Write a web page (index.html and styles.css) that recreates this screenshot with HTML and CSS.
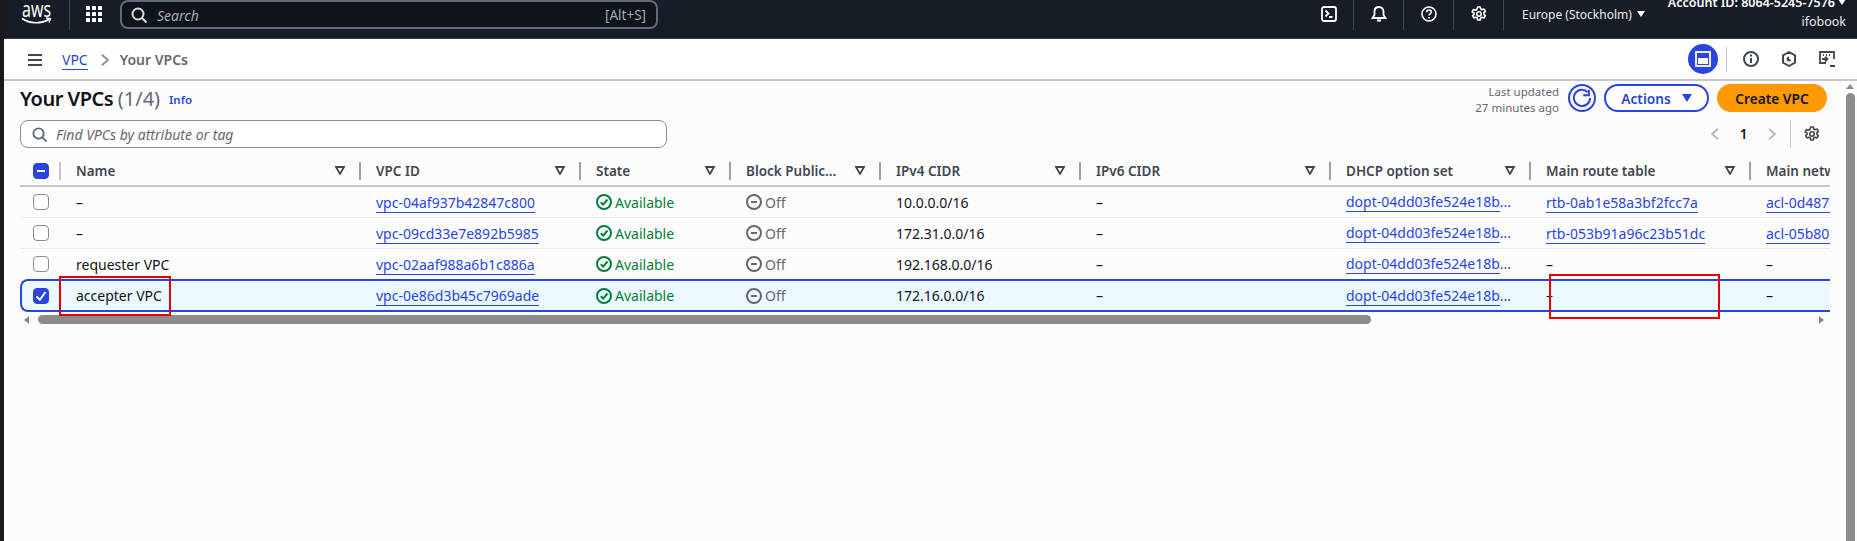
FILE: index.html
```html
<!DOCTYPE html>
<html lang="en">
<head>
<meta charset="utf-8">
<title>Your VPCs</title>
<link rel="stylesheet" href="styles.css">
</head>
<body>
<div class="edge"></div>
<div class="app">
  <header class="topbar">
    <svg class="aws" viewBox="0 0 32 26" width="32" height="26"><text x="2" y="14" textLength="29" lengthAdjust="spacingAndGlyphs" class="aws-text">aws</text><path d="M2 15.500c8 5.500 19 5.500 27 1" fill="none" stroke="#fff" stroke-width="1.600"/><path d="M26 15l4.500 .8-1.500 3.800" fill="none" stroke="#fff" stroke-width="1.300"/></svg>
    <span class="top-sep sep-a"></span>
    <svg class="grid-ico" viewBox="0 0 16 16" width="16" height="16" fill="#fff"><rect width="4" height="4" rx=".6"/><rect x="6" width="4" height="4" rx=".6"/><rect x="12" width="4" height="4" rx=".6"/><rect y="6" width="4" height="4" rx=".6"/><rect x="6" y="6" width="4" height="4" rx=".6"/><rect x="12" y="6" width="4" height="4" rx=".6"/><rect y="12" width="4" height="4" rx=".6"/><rect x="6" y="12" width="4" height="4" rx=".6"/><rect x="12" y="12" width="4" height="4" rx=".6"/></svg>
    <div class="top-search">
      <svg viewBox="0 0 16 16" width="16" height="16" fill="none" stroke="#d5dbdb" stroke-width="2"><circle cx="7" cy="7" r="5.500"/><path d="M11 11l4.500 4.500"/></svg>
      <span class="top-search-text">Search</span>
      <span class="top-search-key">[Alt+S]</span>
    </div>
    <div class="top-icons">
      <span class="top-ico"><svg viewBox="0 0 16 16" width="16" height="16" fill="none" stroke="#fff" stroke-width="1.800"><rect x="1" y="1" width="14" height="14" rx="2"/><path d="M4.500 4.500L7.500 7.500 4.500 10.500M8 11h3.500"/></svg></span>
      <span class="top-ico"><svg viewBox="0 0 16 16" width="16" height="16" fill="none" stroke="#fff" stroke-width="1.800"><path d="M8 1c-3 0-4.500 2-4.500 4.500V9L1.500 12h13l-2-3V5.500C12.500 3 11 1 8 1z"/><path d="M6 14.500h4" stroke-width="2"/></svg></span>
      <span class="top-ico"><svg viewBox="0 0 16 16" width="16" height="16" fill="none" stroke="#fff" stroke-width="1.600"><circle cx="8" cy="8" r="7"/><path d="M5.800 6.200C5.800 4.800 6.800 4 8 4s2.300.8 2.300 2.100c0 1.800-2.300 1.800-2.300 3.500M8 11v1.500" stroke-width="1.700"/></svg></span>
      <span class="top-ico"><svg viewBox="0 0 16 16" width="16" height="16" fill="none" stroke="#fff" stroke-width="1.600"><path d="M6.700 1h2.600l.4 2 1.400.8 2-.7 1.300 2.200-1.500 1.400v1.600l1.500 1.400-1.300 2.200-2-.7-1.400.8-.4 2H6.700l-.4-2-1.400-.8-2 .7-1.300-2.200 1.500-1.400V7.200L1.100 5.800l1.300-2.200 2 .7 1.400-.8z" stroke-linejoin="round"/><circle cx="8" cy="8" r="2.200"/></svg></span>
    </div>
    <div class="region"><span>Europe (Stockholm)</span><i class="caret caret-white"></i></div>
    <div class="account">
      <div class="account-id">Account ID: 8064-5245-7576<i class="caret caret-white"></i></div>
      <div class="account-name">ifobook</div>
    </div>
  </header>

  <nav class="crumbbar">
    <svg class="burger" viewBox="0 0 14 12" width="14" height="12" fill="#414750"><rect width="14" height="2"/><rect y="5" width="14" height="2"/><rect y="10" width="14" height="2"/></svg>
    <a class="crumb-link">VPC</a>
    <svg class="crumb-chev" viewBox="0 0 8 12" width="8" height="12" fill="none" stroke="#879596" stroke-width="2"><path d="M1 .8L6.800 6 1 11.200"/></svg>
    <span class="crumb-here">Your VPCs</span>
    <div class="crumb-tools">
      <span class="panel-btn"><svg viewBox="0 0 16 16" width="16" height="16" fill="none" stroke="#fff" stroke-width="1.800"><rect x="1" y="1" width="14" height="14"/><rect x="3" y="7" width="10" height="6" fill="#fff" stroke="none"/></svg></span>
      <span class="crumb-sep"></span>
      <span class="tool"><svg viewBox="0 0 16 16" width="16" height="16" fill="none" stroke="#414750" stroke-width="2"><circle cx="8" cy="8" r="7"/><path d="M8 7v5M8 3.500v2"/></svg></span>
      <span class="tool"><svg viewBox="0 0 16 16" width="16" height="16" fill="none" stroke="#414750" stroke-width="2"><path d="M8 1l6 3.400v7.200L8 15l-6-3.400V4.400z" stroke-linejoin="round"/><path d="M8 5.500a2.500 2.500 0 1 0 2.300 3.500L8 8z" fill="#414750" stroke="none"/></svg></span>
      <span class="tool"><svg viewBox="0 0 16 16" width="16" height="16" fill="none" stroke="#414750" stroke-width="1.800"><path d="M7 12H1V1h14v7"/><path d="M4 4h1M7 4h1M10 4h1" stroke-width="2"/><path d="M3 8h5M6 5.800L8.500 8 6 10.500M11 15h5"/></svg></span>
    </div>
  </nav>

  <main class="content">
    <div class="page">
      <div class="title-row">
        <h1 class="title">Your VPCs <span class="count">(1/4)</span></h1>
        <a class="info">Info</a>
        <div class="title-actions">
          <div class="updated">Last updated<br>27 minutes ago</div>
          <span class="refresh"><svg viewBox="0 0 16 16" width="20" height="20" fill="none" stroke="#2a44e0" stroke-width="1.600"><path d="M12.500 3.200A6.500 6.500 0 1 0 14.500 8"/><path d="M9 5.800h4.500V1.500"/></svg></span>
          <button class="btn-actions">Actions<i class="caret caret-blue"></i></button>
          <button class="btn-create">Create VPC</button>
        </div>
      </div>
      <div class="filter-row">
        <div class="filter">
          <svg viewBox="0 0 16 16" width="15" height="15" fill="none" stroke="#5f6b7a" stroke-width="2"><circle cx="7" cy="7" r="5.500"/><path d="M11 11l4.500 4.500"/></svg>
          <span>Find VPCs by attribute or tag</span>
        </div>
        <div class="pager">
          <svg viewBox="0 0 8 12" width="8" height="12" fill="none" stroke="#b4bac2" stroke-width="2"><path d="M7 .8L1.200 6 7 11.200"/></svg>
          <span class="page-num">1</span>
          <svg viewBox="0 0 8 12" width="8" height="12" fill="none" stroke="#b4bac2" stroke-width="2"><path d="M1 .8L6.800 6 1 11.200"/></svg>
          <span class="pager-sep"></span>
          <svg class="pager-gear" viewBox="0 0 16 16" width="16" height="16" fill="none" stroke="#414750" stroke-width="1.600"><path d="M6.700 1h2.600l.4 2 1.400.8 2-.7 1.300 2.200-1.500 1.400v1.600l1.500 1.400-1.300 2.200-2-.7-1.400.8-.4 2H6.700l-.4-2-1.400-.8-2 .7-1.300-2.200 1.500-1.400V7.200L1.100 5.800l1.300-2.200 2 .7 1.400-.8z" stroke-linejoin="round"/><circle cx="8" cy="8" r="2.200"/></svg>
        </div>
      </div>

      <div class="table-wrap">
        <table class="vpcs">
          <colgroup>
            <col class="c-check"><col class="c-name"><col class="c-id"><col class="c-state"><col class="c-block"><col class="c-v4"><col class="c-v6"><col class="c-dhcp"><col class="c-rtb"><col class="c-acl">
          </colgroup>
          <thead>
            <tr>
              <th><span class="check check-on"><i class="dash"></i></span></th>
              <th><span class="th-in">Name<svg class="funnel" viewBox="0 0 10 9" width="10" height="9"><path d="M1 1h8L5 8z"/></svg></span></th>
              <th><span class="th-in">VPC ID<svg class="funnel" viewBox="0 0 10 9" width="10" height="9"><path d="M1 1h8L5 8z"/></svg></span></th>
              <th><span class="th-in">State<svg class="funnel" viewBox="0 0 10 9" width="10" height="9"><path d="M1 1h8L5 8z"/></svg></span></th>
              <th><span class="th-in">Block Public...<svg class="funnel" viewBox="0 0 10 9" width="10" height="9"><path d="M1 1h8L5 8z"/></svg></span></th>
              <th><span class="th-in">IPv4 CIDR<svg class="funnel" viewBox="0 0 10 9" width="10" height="9"><path d="M1 1h8L5 8z"/></svg></span></th>
              <th><span class="th-in">IPv6 CIDR<svg class="funnel" viewBox="0 0 10 9" width="10" height="9"><path d="M1 1h8L5 8z"/></svg></span></th>
              <th><span class="th-in">DHCP option set<svg class="funnel" viewBox="0 0 10 9" width="10" height="9"><path d="M1 1h8L5 8z"/></svg></span></th>
              <th><span class="th-in">Main route table<svg class="funnel" viewBox="0 0 10 9" width="10" height="9"><path d="M1 1h8L5 8z"/></svg></span></th>
              <th class="th-last"><span class="th-in">Main network ACL</span></th>
            </tr>
          </thead>
          <tbody>
            <tr>
              <td><span class="check"></span></td><td>–</td><td><a class="lnk">vpc-04af937b42847c800</a></td>
              <td><span class="ok"><svg viewBox="0 0 16 16" width="16" height="16" fill="none" stroke="#037f3c" stroke-width="2"><circle cx="8" cy="8" r="7"/><path d="M4.800 8.200L7.200 10.600 11.500 5.500"/></svg>Available</span></td>
              <td><span class="off"><svg viewBox="0 0 16 16" width="16" height="16" fill="none" stroke="#656871" stroke-width="2"><circle cx="8" cy="8" r="7"/><path d="M5 8h6"/></svg>Off</span></td>
              <td>10.0.0.0/16</td><td>–</td><td><span class="dhcp"><a class="lnk lnk-cut">dopt-04dd03fe524e18b</a>...</span></td><td><a class="lnk">rtb-0ab1e58a3bf2fcc7a</a></td><td><a class="lnk">acl-0d487a1c9e2f6b3d4</a></td>
            </tr>
            <tr>
              <td><span class="check"></span></td><td>–</td><td><a class="lnk">vpc-09cd33e7e892b5985</a></td>
              <td><span class="ok"><svg viewBox="0 0 16 16" width="16" height="16" fill="none" stroke="#037f3c" stroke-width="2"><circle cx="8" cy="8" r="7"/><path d="M4.800 8.200L7.200 10.600 11.500 5.500"/></svg>Available</span></td>
              <td><span class="off"><svg viewBox="0 0 16 16" width="16" height="16" fill="none" stroke="#656871" stroke-width="2"><circle cx="8" cy="8" r="7"/><path d="M5 8h6"/></svg>Off</span></td>
              <td>172.31.0.0/16</td><td>–</td><td><span class="dhcp"><a class="lnk lnk-cut">dopt-04dd03fe524e18b</a>...</span></td><td><a class="lnk">rtb-053b91a96c23b51dc</a></td><td><a class="lnk">acl-05b80e7d2c4a91f36</a></td>
            </tr>
            <tr>
              <td><span class="check"></span></td><td>requester VPC</td><td><a class="lnk">vpc-02aaf988a6b1c886a</a></td>
              <td><span class="ok"><svg viewBox="0 0 16 16" width="16" height="16" fill="none" stroke="#037f3c" stroke-width="2"><circle cx="8" cy="8" r="7"/><path d="M4.800 8.200L7.200 10.600 11.500 5.500"/></svg>Available</span></td>
              <td><span class="off"><svg viewBox="0 0 16 16" width="16" height="16" fill="none" stroke="#656871" stroke-width="2"><circle cx="8" cy="8" r="7"/><path d="M5 8h6"/></svg>Off</span></td>
              <td>192.168.0.0/16</td><td>–</td><td><span class="dhcp"><a class="lnk lnk-cut">dopt-04dd03fe524e18b</a>...</span></td><td>–</td><td>–</td>
            </tr>
            <tr class="selected">
              <td><span class="check check-on"><svg viewBox="0 0 16 16" width="16" height="16" fill="none" stroke="#fff" stroke-width="2"><path d="M3.500 8.500L6.800 11.800 12.500 4"/></svg></span></td><td>accepter VPC</td><td><a class="lnk">vpc-0e86d3b45c7969ade</a></td>
              <td><span class="ok"><svg viewBox="0 0 16 16" width="16" height="16" fill="none" stroke="#037f3c" stroke-width="2"><circle cx="8" cy="8" r="7"/><path d="M4.800 8.200L7.200 10.600 11.500 5.500"/></svg>Available</span></td>
              <td><span class="off"><svg viewBox="0 0 16 16" width="16" height="16" fill="none" stroke="#656871" stroke-width="2"><circle cx="8" cy="8" r="7"/><path d="M5 8h6"/></svg>Off</span></td>
              <td>172.16.0.0/16</td><td>–</td><td><span class="dhcp"><a class="lnk lnk-cut">dopt-04dd03fe524e18b</a>...</span></td><td>–</td><td>–</td>
            </tr>
          </tbody>
        </table>
      </div>
      <div class="hscroll">
        <i class="arrow-left"></i>
        <div class="hscroll-track"><div class="hscroll-thumb"></div></div>
        <i class="arrow-right"></i>
      </div>
      <span class="mark mark-name"></span>
      <span class="mark mark-rtb"></span>
    </div>
    <div class="vscroll">
      <i class="arrow-up"></i>
      <div class="vscroll-thumb"></div>
    </div>
  </main>
</div>
</body>
</html>
```

FILE: styles.css
```css
* { box-sizing: border-box; }
html, body { height: 100%; }
body {
  margin: 0;
  display: flex;
  height: 541px;
  overflow: hidden;
  background: #1a1a1a;
  font-family: "Noto Sans", "Liberation Sans", sans-serif;
  font-size: 14px;
  color: #0f141a;
}
.edge { width: 4px; flex: none; background: #1a1a1a; }
.app { flex: 1; min-width: 0; display: flex; flex-direction: column; background: #fcfcfc; }

/* top bar */
.topbar {
  height: 39px;
  flex: none;
  display: flex;
  align-items: flex-start;
  background: #161d26;
  border-bottom: 1px solid #3b4048;
  color: #fff;
}
.aws { margin: 3px 0 0 16px; flex: none; }
.aws-text { font: 400 21px "Noto Sans", sans-serif; fill: #fff; }
.top-sep { width: 1px; height: 30px; background: #414750; flex: none; }
.sep-a { margin-left: 17px; }
.grid-ico { margin: 6px 0 0 16px; flex: none; }
.top-search {
  margin-left: 18px;
  width: 538px;
  height: 29px;
  flex: none;
  display: flex;
  align-items: center;
  padding: 1px 10px 0 9px;
  background: #0f141a;
  border: 2px solid #5f6b7a;
  border-radius: 8px;
}
.top-search-text { margin-left: 10px; font-style: italic; color: #a4abb5; font-size: 14px; }
.top-search-key { margin-left: auto; color: #a4abb5; font-size: 13.5px; }
.top-icons { margin-left: 646px; display: flex; flex: none; }
.top-ico {
  width: 50px;
  height: 30px;
  display: flex;
  align-items: center;
  justify-content: center;
  border-right: 1px solid #414750;
  padding-bottom: 2px;
}
.region {
  margin-left: 18px;
  height: 28px;
  display: flex;
  align-items: center;
  flex: none;
  font-size: 12px;
  color: #e8eaed;
}
.caret { display: inline-block; width: 0; height: 0; border-style: solid; border-color: transparent; }
.caret-white { border-width: 6px 4px 0; border-top-color: #fff; margin-left: 5px; }
.account { margin-left: auto; padding-right: 11px; text-align: right; flex: none; margin-top: -7px; font-size: 12.5px; line-height: 20px; }
.account-id { font-weight: 600; white-space: nowrap; }
.account-id .caret-white { margin-left: 3px; vertical-align: 2px; }
.account-name { color: #e8eaed; margin-top: -1px; }

/* breadcrumb */
.crumbbar {
  height: 42px;
  flex: none;
  display: flex;
  align-items: center;
  background: #fff;
  border-bottom: 2px solid #c6c6cd;
  padding-left: 24px;
  font-size: 14px;
}
.burger { flex: none; margin-top: 1px; }
.crumb-link { margin-left: 20px; color: #2a44e0; border-bottom: 1px solid #2a44e0; line-height: 19px; margin-top: 2px; }
.crumb-chev { margin: 1px 11px 0 13px; }
.crumb-here { font-weight: 600; color: #656871; margin-top: 1px; }
.crumb-tools { margin-left: auto; display: flex; align-items: center; padding-right: 22px; }
.panel-btn {
  width: 30px; height: 30px; border-radius: 50%;
  background: #2a44e0;
  display: flex; align-items: center; justify-content: center;
}
.crumb-sep { width: 1px; height: 25px; background: #c6c6cd; margin: 0 16px 0 8px; }
.tool { width: 16px; display: flex; }
.tool + .tool { margin-left: 22px; }

/* content */
.content { flex: 1; display: flex; min-height: 0; background: #fcfcfc; }
.page { flex: 1; min-width: 0; padding: 0 16px; position: relative; }
.title-row { display: flex; align-items: flex-start; height: 39px; }
.title { margin: 3px 0 0; font-size: 20px; line-height: 30px; font-weight: 600; letter-spacing: -.5px; }
.count { font-weight: 400; color: #656871; letter-spacing: 0; }
.info { margin: 11px 0 0 9px; color: #2a44e0; font-size: 11.5px; font-weight: 600; line-height: 16px; }
.title-actions { margin-left: auto; display: flex; align-items: flex-start; margin-top: 3px; padding-right: 3px; }
.updated { text-align: right; font-size: 11.5px; line-height: 16px; color: #656871; margin-right: 9px; }
.refresh {
  width: 28px; height: 28px; border-radius: 50%;
  border: 2px solid #2a44e0;
  display: flex; align-items: center; justify-content: center;
  margin-right: 8px;
}
.btn-actions {
  width: 105px; height: 28px; padding: 0; border-radius: 14px;
  border: 2px solid #2a44e0; background: #fff; color: #2a44e0;
  font: 600 13.7px "Noto Sans", sans-serif;
  display: flex; align-items: center; justify-content: center;
}
.caret-blue { border-width: 8px 5.5px 0; border-top-color: #2a44e0; margin-left: 11px; }
.btn-create {
  margin-left: 8px;
  width: 110px; height: 28px; padding: 0; border-radius: 14px; border: 0;
  background: #ff9900; color: #0f141a;
  font: 600 13.7px "Noto Sans", sans-serif;
}
.filter-row { display: flex; align-items: center; height: 28px; }
.filter {
  width: 647px; height: 28px;
  border: 1px solid #8c8c94; border-radius: 8px; background: #fff;
  display: flex; align-items: center; gap: 9px;
  padding: 0 11px;
  font-style: italic; font-size: 14px; color: #656871;
}
.pager { margin-left: auto; display: flex; align-items: center; padding-right: 10px; height: 28px; }
.page-num { width: 49px; text-align: center; font-weight: 600; font-size: 13.5px; }
.pager-sep { width: 1px; height: 28px; background: #c6c6cd; margin: 0 13px 0 14px; }

/* table */
.table-wrap { margin-top: 8px; overflow: hidden; width: 1810px; }
.vpcs { table-layout: fixed; border-collapse: separate; border-spacing: 0; width: 1997px; }
.c-check { width: 39px; }
.c-name { width: 300px; }
.c-id { width: 220px; }
.c-state { width: 150px; }
.c-block { width: 150px; }
.c-v4 { width: 200px; }
.c-v6 { width: 250px; }
.c-dhcp { width: 200px; }
.c-rtb { width: 220px; }
.c-acl { width: 268px; }
th {
  height: 31px;
  padding: 0;
  text-align: left;
  font-weight: 600;
  font-size: 13.5px;
  color: #414750;
  border-bottom: 2px solid #c6c6cd;
}
th:first-child, td:first-child { padding-left: 13px; }
.th-in {
  display: flex;
  align-items: center;
  height: 18px;
  padding: 0 14px 0 15px;
  border-left: 2px solid #9aa0a8;
  white-space: nowrap;
  overflow: hidden;
}
th:nth-child(2) .th-in { border-left-color: #c6c6cd; }
th.th-last .th-in { padding-right: 0; }
.funnel { margin-left: auto; fill: none; stroke: #414750; stroke-width: 1.8; flex: none; }
td {
  height: 31px;
  padding: 0 0 0 17px;
  font-size: 14px;
  border-bottom: 1px solid #e9ebed;
  white-space: nowrap;
  overflow: hidden;
}
tbody tr:nth-child(3) td { border-bottom: 0; height: 30px; }
.selected td {
  height: 33px;
  background: #ebf9ff;
  border-top: 2px solid #2a44e0;
  border-bottom: 2px solid #2a44e0;
}
.selected td:first-child { border-left: 2px solid #2a44e0; border-radius: 8px 0 0 8px; padding-left: 11px; }
.check {
  display: flex; align-items: center; justify-content: center;
  width: 16px; height: 16px;
  border: 1px solid #8c8c94; border-radius: 4px; background: #fff;
}
.check-on { background: #2a44e0; border-color: #2a44e0; }
.check-on svg { flex: none; }
.dash { width: 8px; height: 2px; background: #fff; }
.lnk { color: #2a44e0; border-bottom: 1px solid #2a44e0; }
.lnk-cut { display: inline-block; line-height: 18px; }
.ok, .off { display: flex; align-items: center; gap: 3px; }
.ok { color: #037f3c; }
.off { color: #656871; }
.dhcp { color: #2a44e0; }

/* scrollbars */
.hscroll { display: flex; align-items: center; width: 1810px; height: 9px; margin-top: 3px; }
.arrow-left { width: 0; height: 0; flex: none; border-style: solid; border-width: 4px 5px 4px 0; border-color: transparent #8c8c8c transparent transparent; margin-left: 4px; }
.hscroll-track { flex: 1; margin: 0 0 0 9px; }
.hscroll-thumb { width: 1333px; height: 9px; background: #8c8c8c; border-radius: 5px; }
.arrow-right { width: 0; height: 0; flex: none; border-style: solid; border-width: 4px 0 4px 5px; border-color: transparent transparent transparent #8c8c8c; margin-right: 6px; }
.vscroll { width: 11px; flex: none; display: flex; flex-direction: column; align-items: flex-start; }
.arrow-up { width: 0; height: 0; border-style: solid; border-width: 0 4.5px 5px; border-color: transparent transparent #8c8c8c; margin-top: 3px; }
.vscroll-thumb { width: 9px; flex: 1; margin-top: 4px; background: #8c8c8c; border-radius: 5px 5px 0 0; }

/* annotations drawn over the table */
.mark { position: absolute; border: 2px solid #e60000; pointer-events: none; }
.mark-name { left: 55px; top: 195px; width: 112px; height: 40px; }
.mark-rtb { left: 1545px; top: 193px; width: 171px; height: 45px; }
```
